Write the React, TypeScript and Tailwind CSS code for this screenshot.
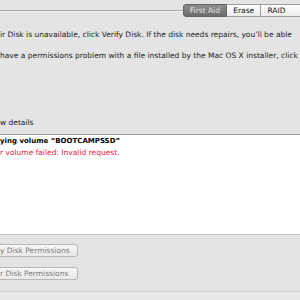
export default function App() {
  return (
    <div className="w-[300px] h-[300px] overflow-hidden bg-[#e4e4e4] text-[7.5px] text-[#222] font-['DejaVu_Sans',sans-serif] whitespace-nowrap">
      {/* Tab strip */}
      <div className="h-[18px] pt-[4px] flex items-start">
        <div className="w-[191px] h-[13px] flex items-center">
          <div className="w-full h-px bg-[#a9a9a9] shadow-[0_1px_0_#f2f2f2]" />
        </div>
        <div className="h-[13px] w-[46px] flex items-center justify-center rounded-l-[3px] border border-[#636363] bg-gradient-to-b from-[#8d8d8d] to-[#6c6c6c] text-[#e6e6e6]">
          First Aid
        </div>
        <div className="h-[13px] w-[36px] flex items-center justify-center border-y border-r border-[#9c9c9c] bg-gradient-to-b from-[#ffffff] to-[#ebebeb] text-[#111]">
          Erase
        </div>
        <div className="h-[13px] w-[40px] flex items-center pl-[6px] border-y border-[#9c9c9c] bg-gradient-to-b from-[#ffffff] to-[#ebebeb] text-[#111]">
          RAID
        </div>
      </div>

      {/* Description */}
      <div className="h-[116px] pt-[13px] leading-[8px]">
        <div>ir Disk is unavailable, click Verify Disk. If the disk needs repairs, you’ll be able</div>
        <div className="mt-[13px]">have a permissions problem with a file installed by the Mac OS X installer, click</div>
        <div className="mt-[59px]">w details</div>
      </div>

      {/* Log area */}
      <div className="h-[101px] bg-white border-t border-[#9a9a9a] border-b border-b-[#c4c4c4] pt-px leading-[11px]">
        <div className="font-bold text-[7px] text-black">ying volume “BOOTCAMPSSD”</div>
        <div className="text-[#e8173c]">r volume failed: Invalid request.</div>
      </div>

      {/* Buttons */}
      <div className="h-[57px] pt-[9px] flex flex-col gap-[10px] border-b border-[#cfcfcf]">
        <div className="w-[78px] h-[13px] flex items-center rounded-r-[3px] border-y border-r border-[#b8b8b8] bg-gradient-to-b from-[#f7f7f7] to-[#e9e9e9] text-[#7a7a7a]">
          y Disk Permissions
        </div>
        <div className="w-[78px] h-[13px] flex items-center rounded-r-[3px] border-y border-r border-[#b8b8b8] bg-gradient-to-b from-[#f7f7f7] to-[#e9e9e9] text-[#7a7a7a]">
          r Disk Permissions
        </div>
      </div>
      <div className="h-[8px] bg-[#e9e9e9]" />
    </div>
  );
}
